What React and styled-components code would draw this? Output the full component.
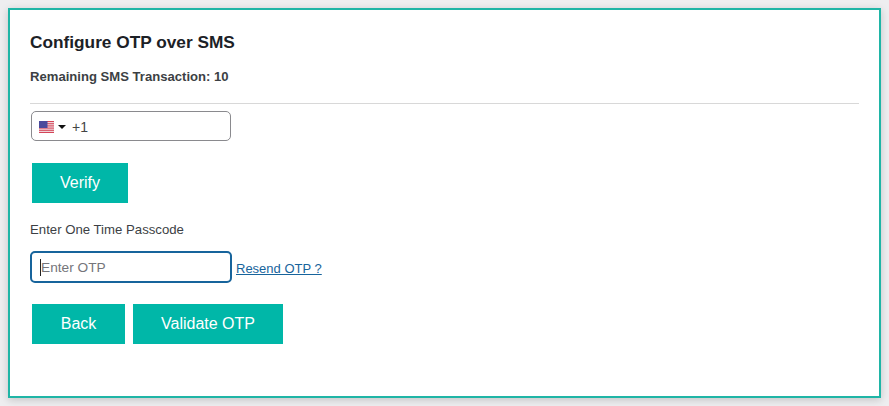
import React from 'react';
import styled, { createGlobalStyle } from 'styled-components';

const GlobalStyle = createGlobalStyle`
  html, body {
    margin: 0;
    padding: 0;
    background: #eeeef0;
    font-family: "Liberation Sans", Arial, sans-serif;
  }
`;

const Page = styled.div`
  width: 889px;
  height: 406px;
  padding: 8px;
  box-sizing: border-box;
  overflow: hidden;
`;

const Card = styled.div`
  width: 873px;
  height: 390px;
  box-sizing: border-box;
  background: #fff;
  border: 2px solid #1fb5a6;
  box-shadow: 0 2px 8px rgba(0, 0, 0, 0.18);
  padding: 21px 20px 0 20px;
`;

const Title = styled.h2`
  margin: 0;
  font-size: 17.25px;
  line-height: 22px;
  font-weight: 700;
  color: #1c2126;
`;

const Remaining = styled.p`
  margin: 16px 0 0;
  font-size: 13.1px;
  line-height: 16px;
  font-weight: 700;
  color: #3c3f44;
`;

const Divider = styled.hr`
  margin: 18px 0 0;
  border: 0;
  border-top: 1px solid #d8d8d8;
`;

const PhoneField = styled.div`
  width: 200px;
  height: 30px;
  box-sizing: border-box;
  margin: 7px 0 0 1px;
  padding: 2px 0 0 7px;
  display: flex;
  align-items: center;
  border: 1px solid #8a8a8e;
  border-radius: 5px;
  background: #fff;
`;

const Flag = styled.svg`
  width: 15px;
  height: 12px;
  display: block;
`;

const Caret = styled.span`
  width: 0;
  height: 0;
  margin-left: 4px;
  border-left: 4px solid transparent;
  border-right: 4px solid transparent;
  border-top: 4px solid #111;
`;

const Dial = styled.span`
  margin-left: 6px;
  font-size: 14px;
  color: #444;
`;

const Button = styled.button`
  display: block;
  width: ${(p) => p.$width}px;
  height: 40px;
  padding: 0;
  border: 0;
  background: #00b7a8;
  color: #fff;
  font-family: inherit;
  font-size: 16px;
  cursor: pointer;
`;

const VerifyRow = styled.div`
  margin: 22px 0 0 2px;
`;

const Label = styled.label`
  display: block;
  margin-top: 19px;
  font-size: 13.2px;
  line-height: 16px;
  color: #3c3f44;
`;

const OtpRow = styled.div`
  margin-top: 13px;
  display: flex;
  align-items: center;
  gap: 4px;
`;

const OtpWrap = styled.div`
  position: relative;
  width: 202px;
  height: 32px;
  &::after {
    content: '';
    position: absolute;
    left: 10px;
    top: 8px;
    width: 1px;
    height: 17px;
    background: #222;
  }
`;

const OtpInput = styled.input`
  width: 100%;
  height: 100%;
  box-sizing: border-box;
  padding: 1px 0 0 9px;
  border: 2px solid #17649c;
  border-radius: 5px;
  outline: none;
  caret-color: transparent;
  font-family: inherit;
  font-size: 13.7px;
  &::placeholder {
    color: #75757a;
    opacity: 1;
  }
`;

const Resend = styled.a`
  font-size: 13px;
  color: #17649c;
  text-decoration: underline;
  position: relative;
  top: 1px;
`;

const Actions = styled.div`
  margin: 21px 0 0 2px;
  display: flex;
  gap: 8px;
`;

function UsFlag() {
  const stripes = [0, 1, 2, 3, 4, 5, 6];
  return (
    <Flag viewBox="0 0 15 12" aria-hidden="true">
      <rect width="15" height="12" fill="#f4f0f2" />
      {stripes.map((i) => (
        <rect key={i} y={(i * 12) / 6.5} width="15" height="0.92" fill="#d2374c" />
      ))}
      <rect width="8.5" height="7" fill="#4a4a9c" />
    </Flag>
  );
}

export default function App() {
  return (
    <Page>
      <GlobalStyle />
      <Card>
        <Title>Configure OTP over SMS</Title>
        <Remaining>Remaining SMS Transaction: 10</Remaining>
        <Divider />
        <PhoneField>
          <UsFlag />
          <Caret />
          <Dial>+1</Dial>
        </PhoneField>
        <VerifyRow>
          <Button $width={96}>Verify</Button>
        </VerifyRow>
        <Label htmlFor="otp">Enter One Time Passcode</Label>
        <OtpRow>
          <OtpWrap>
            <OtpInput id="otp" placeholder="Enter OTP" />
          </OtpWrap>
          <Resend href="#">Resend OTP ?</Resend>
        </OtpRow>
        <Actions>
          <Button $width={93}>Back</Button>
          <Button $width={150}>Validate OTP</Button>
        </Actions>
      </Card>
    </Page>
  );
}
